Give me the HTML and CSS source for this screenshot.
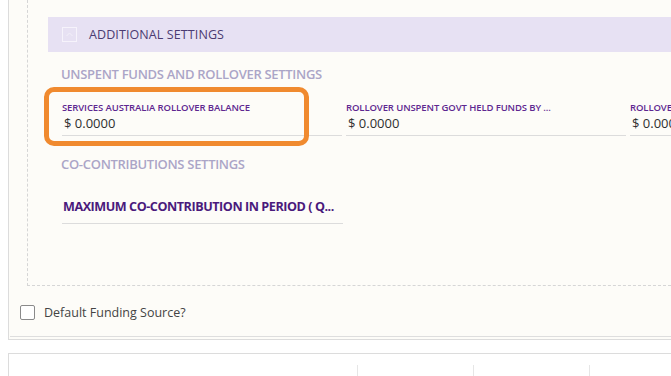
FILE: index.html
```html
<!DOCTYPE html>
<html lang="en">
<head>
  <meta charset="UTF-8">
  <meta name="viewport" content="width=device-width, initial-scale=1.0">
  <title>Funding Source</title>
  <link rel="stylesheet" href="styles.css">
</head>
<body>
  <div class="panel">
    <div class="panel-inner">
      <div class="group">
        <div class="group-header">
          <span class="toggle">
            <svg width="15" height="15" viewBox="0 0 15 15">
              <rect x="0.5" y="0.5" width="14" height="14" fill="none" stroke="#f6f3fb" />
              <path d="M4.5 9 L7.5 6 L10.5 9" fill="none" stroke="#f3f0f9" stroke-width="1" />
            </svg>
          </span>
          <span class="group-title">ADDITIONAL SETTINGS</span>
        </div>
        <div class="group-body">
          <h3 class="sub-title">UNSPENT FUNDS AND ROLLOVER SETTINGS</h3>
          <div class="field-row">
            <div class="field">
              <label class="field-label">SERVICES AUSTRALIA ROLLOVER BALANCE</label>
              <div class="field-value">$ 0.0000</div>
              <span class="highlight"></span>
            </div>
            <div class="field">
              <label class="field-label">ROLLOVER UNSPENT GOVT HELD FUNDS BY ...</label>
              <div class="field-value">$ 0.0000</div>
            </div>
            <div class="field">
              <label class="field-label">ROLLOVER UNSPENT PROVIDER HELD FUNDS</label>
              <div class="field-value">$ 0.0000</div>
            </div>
          </div>
          <h3 class="sub-title second">CO-CONTRIBUTIONS SETTINGS</h3>
          <div class="field-big">MAXIMUM CO-CONTRIBUTION IN PERIOD ( Q...</div>
        </div>
      </div>
      <label class="check-row">
        <span class="check-box"></span>
        Default Funding Source?
      </label>
    </div>
  </div>
  <div class="table-panel">
    <div class="table-head">
      <span class="col col-wide"></span>
      <span class="col"></span>
      <span class="col"></span>
      <span class="col"></span>
    </div>
  </div>
</body>
</html>
```

FILE: styles.css
```css
body {
  margin: 0;
  background: #ffffff;
  font-family: "Open Sans", "Noto Sans", sans-serif;
  color: #333;
  overflow: hidden;
}
.panel {
  margin-left: 8px;
  border-left: 1px solid #dcdcdc;
  border-bottom: 1px solid #dcdcdc;
  background: #fdfcf8;
  padding-bottom: 2px;
}
.panel-inner {
  border-bottom: 1px solid #dedede;
  margin-left: 1px;
  padding-bottom: 15px;
}
.group {
  margin-left: 17px;
  border-left: 1px dashed #d6d6d6;
  border-bottom: 1px dashed #d6d6d6;
  padding: 17px 0 0 20px;
  height: 268px;
}
.group-header {
  display: flex;
  align-items: center;
  height: 35px;
  background: #e7e1f3;
  padding-left: 14px;
}
.toggle {
  display: flex;
  width: 15px;
  height: 15px;
  margin-right: 12px;
}
.group-title {
  font-size: 12.5px;
  color: #4b3b72;
  letter-spacing: 0.1px;
}
.group-body {
  padding-left: 13px;
}
.sub-title {
  margin: 13px 0 0;
  font-size: 13px;
  font-weight: 600;
  color: #aba5c7;
  letter-spacing: -0.3px;
  line-height: 18px;
}
.sub-title.second {
  margin-top: 19px;
}
.field-row {
  display: flex;
  gap: 4px;
  margin-top: 19px;
  margin-left: 1px;
}
.field {
  position: relative;
  flex: 0 0 280px;
  border-bottom: 1px solid #dcdcdc;
  padding-bottom: 3px;
}
.field-label {
  display: block;
  font-size: 9.5px;
  font-weight: 600;
  color: #5e2790;
  line-height: 12px;
  letter-spacing: -0.1px;
  white-space: nowrap;
  overflow: hidden;
}
.field-value {
  font-size: 13px;
  line-height: 18px;
  color: #2f2f2f;
  padding-left: 2px;
}
.highlight {
  position: absolute;
  left: -18px;
  top: -15px;
  width: 255px;
  height: 49px;
  border: 5px solid #f08a2f;
  border-radius: 10px;
}
.field-big {
  width: 280px;
  margin: 25px 0 0 1px;
  padding: 0 0 7px 1px;
  font-size: 12.6px;
  font-weight: 700;
  color: #4a1a7c;
  letter-spacing: -0.45px;
  line-height: 18px;
  white-space: nowrap;
  border-bottom: 1px solid #dcdcdc;
}
.check-row {
  display: flex;
  align-items: center;
  margin: 18px 0 0 10px;
  font-size: 12.5px;
  color: #444;
}
.check-box {
  width: 13px;
  height: 13px;
  border: 1px solid #8a8a8a;
  border-radius: 2px;
  background: #fff;
  margin-right: 9px;
}
.table-panel {
  margin: 13px 0 0 8px;
  border-top: 1px solid #dcdcdc;
  border-left: 1px solid #dcdcdc;
  height: 40px;
}
.table-head {
  display: flex;
  padding-top: 11px;
}
.col {
  flex: 0 0 115px;
  height: 20px;
  border-left: 1px solid #e6e6e6;
}
.col-wide {
  flex-basis: 348px;
  border-left: none;
}
```
